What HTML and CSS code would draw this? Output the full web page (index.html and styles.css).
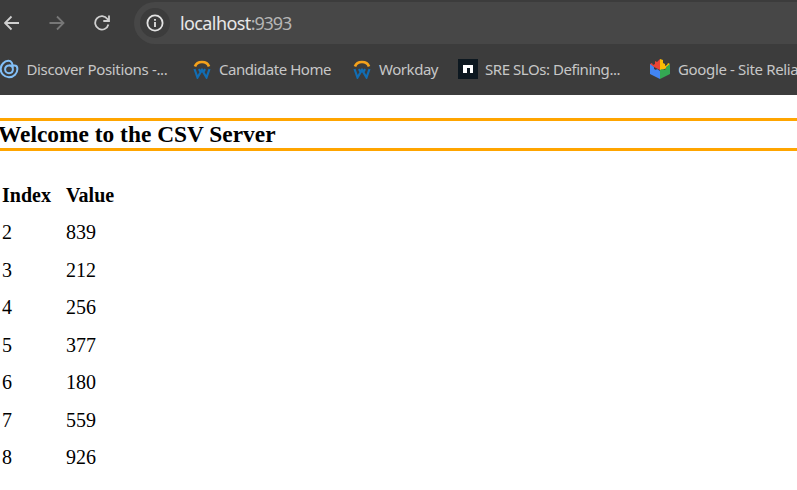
FILE: index.html
```html
<!DOCTYPE html>
<html lang="en">
<head>
<meta charset="utf-8">
<title>CSV Server</title>
<link rel="stylesheet" href="styles.css">
</head>
<body>
<header class="chrome">
  <div class="toolbar">
    <nav class="nav">
      <svg width="16" height="16" viewBox="0 0 16 16"><path d="M15 8H1.5M7.5 1.5L1 8l6.500 6.500"/></svg>
      <svg class="disabled" width="16" height="16" viewBox="0 0 16 16"><path d="M.5 8h13.500M8 1.500L14.500 8 8 14.500"/></svg>
      <svg width="16" height="16" viewBox="0 0 16 16"><path d="M14.400 9.500A6.700 6.700 0 1 1 13.400 4L15 6M15 .5V6H9.300"/></svg>
    </nav>
    <div class="omnibox">
      <span class="info"><svg width="18" height="18" viewBox="0 0 18 18"><circle cx="9" cy="9" r="7.600"/><path d="M9 8v5M9 4.900v1.800"/></svg></span>
      <span class="url">localhost<span class="port">:9393</span></span>
    </div>
  </div>
  <nav class="bookmarks">
    <a class="bookmark"><svg width="20" height="20" viewBox="0 0 20 20"><path class="swirl" d="M10 14.200a3.900 3.900 0 1 1 3.900-3.900c0 2.500-1.500 3.900-3.900 3.900zM13.700 9C14 4.500 12.500 1.700 9.200 1.800 5.500 2 2 5.500 1.700 9.700c-.3 4.500 3.600 8.500 8.200 8.500 5 0 8.500-3.900 8.500-8.200 0-2.500-1-3.400-3-3.400H10"/></svg><span class="label discover">Discover Positions -...</span></a>
    <a class="bookmark"><svg width="20" height="20" viewBox="0 0 20 20"><path class="arc" d="M3 7.500a7.300 6.300 0 0 1 14 0"/><path class="wave" d="M2.500 10l3 8.500L10 11l4.500 7.500 3-8.500M7 10l2 4M13 10l-2 4"/></svg><span class="label">Candidate Home</span></a>
    <a class="bookmark"><svg width="20" height="20" viewBox="0 0 20 20"><path class="arc" d="M3 7.500a7.300 6.300 0 0 1 14 0"/><path class="wave" d="M2.500 10l3 8.500L10 11l4.500 7.500 3-8.500M7 10l2 4M13 10l-2 4"/></svg><span class="label">Workday</span></a>
    <a class="bookmark"><svg width="20" height="20" viewBox="0 0 20 20"><path fill="#0d1820" d="M0 0h20v20H0z"/><path fill="#fff" d="M5 6h10v8h-3V9H9v5H5z"/></svg><span class="label">SRE SLOs: Defining...</span></a>
    <a class="bookmark"><svg width="20" height="20" viewBox="0 0 20 20"><path fill="#ea4335" d="M0 5l2-1 1 2 2-1V2l2 1 3-3v11l-4-2-6-3z"/><path fill="#fbbc04" d="M10 0l3 1v3l2 1v2l2-1 1-2 2 1-3 4-5 2-2 1z"/><path fill="#4285f4" d="M0 5l4 3v2l2 1 1-1 3 2v8L0 15z"/><path fill="#34a853" d="M10 11l2-1 2 1 2-1V8l4-3v10l-10 5z"/></svg><span class="label google">Google - Site Reliability</span></a>
  </nav>
</header>
<main class="page">
  <h3>Welcome to the CSV Server</h3>
  <table>
    <tr><th>Index</th><th>Value</th></tr>
    <tr><td>2</td><td>839</td></tr>
    <tr><td>3</td><td>212</td></tr>
    <tr><td>4</td><td>256</td></tr>
    <tr><td>5</td><td>377</td></tr>
    <tr><td>6</td><td>180</td></tr>
    <tr><td>7</td><td>559</td></tr>
    <tr><td>8</td><td>926</td></tr>
  </table>
</main>
</body>
</html>
```
FILE: styles.css
```css
* { box-sizing: border-box; }
body { margin: 0; overflow: hidden; background: #fff; }
svg { display: block; flex: none; }
.chrome { height: 95px; overflow: hidden; background: #3c3c3c; color: #c7c7c7; font-family: "Noto Sans", sans-serif; }
.toolbar { display: flex; height: 44px; padding-top: 2px; }
.nav { display: flex; align-items: center; gap: 29px; width: 134px; flex: none; padding-left: 4px; }
.nav svg { fill: none; stroke: #d0d0d0; stroke-width: 1.8; }
.nav .disabled { stroke: #777; }
.omnibox { display: flex; flex: 1; align-items: center; gap: 10px; padding-left: 6px; background: #474747; border-radius: 21px 0 0 21px; }
.info { display: grid; place-items: center; width: 30px; height: 30px; border-radius: 50%; background: #3c3c3c; }
.info svg { fill: none; stroke: #e3e3e3; stroke-width: 1.8; }
.url { font-size: 18px; letter-spacing: -.6px; color: #e8e8e8; }
.port { letter-spacing: -1.1px; color: #b5b5b5; }
.bookmarks { display: grid; grid-template-columns: 193px 160px 106px 192px 200px; height: 50px; margin-left: -1px; }
.bookmark { display: flex; align-items: center; gap: 7px; white-space: nowrap; }
.label { font-size: 15px; letter-spacing: -.45px; }
.discover { margin-left: .5px; letter-spacing: -.35px; }
.google { margin-left: 1px; letter-spacing: -.35px; }
.swirl { fill: none; stroke: #83c0f8; stroke-width: 2; }
.arc { fill: none; stroke: #f5a21b; stroke-width: 2.7; }
.wave { fill: none; stroke: #126db3; stroke-width: 2.2; }
.page { font: 20px "Liberation Serif", serif; color: #000; }
h3 { margin: 23px 0 25.5px; height: 33px; border: solid orange; border-width: 3px 0; font-size: 23.4px; line-height: 27px; text-indent: -2px; }
table { border-collapse: collapse; }
tr { height: 37.5px; }
th, td { padding: 0 0 0 2px; text-align: left; }
th:first-child, td:first-child { width: 64px; }
```
